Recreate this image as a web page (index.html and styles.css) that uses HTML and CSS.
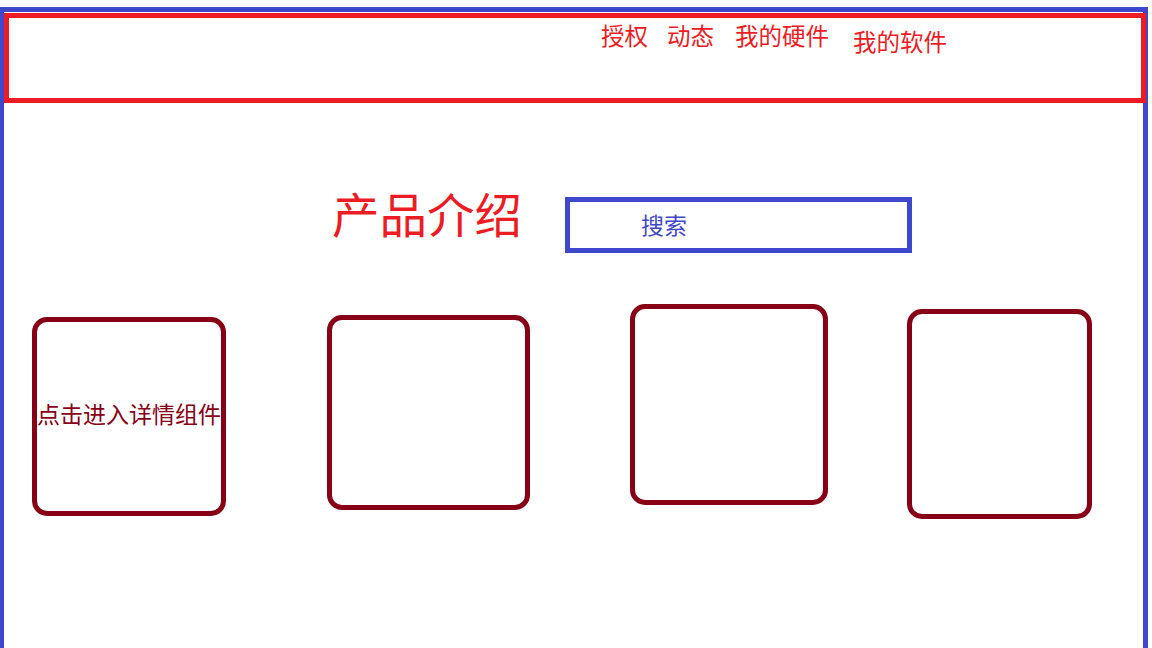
FILE: index.html
```html
<!DOCTYPE html>
<html lang="zh-CN">
<head>
<meta charset="utf-8">
<title>产品介绍</title>
<link rel="stylesheet" href="styles.css">
</head>
<body>
<div class="frame">
  <header class="header">
    <nav class="nav">
      <a class="nav-item nav-auth">授权</a>
      <a class="nav-item nav-news">动态</a>
      <a class="nav-item nav-hw">我的硬件</a>
      <a class="nav-item nav-sw">我的软件</a>
    </nav>
  </header>
  <section class="intro">
    <h1 class="title">产品介绍</h1>
    <div class="search">搜索</div>
  </section>
  <section class="cards">
    <div class="card card-1"><span class="card-text">点击进入详情组件</span></div>
    <div class="card card-2"></div>
    <div class="card card-3"></div>
    <div class="card card-4"></div>
  </section>
</div>
</body>
</html>
```
FILE: styles.css
```css
* { box-sizing: border-box; }
html, body { margin: 0; padding: 0; background: #ffffff; }
body {
  font-family: "Noto Sans CJK SC", "Noto Sans", sans-serif;
  overflow: hidden;
}
.frame {
  width: 1148px;
  height: 641px;
  margin-top: 7px;
  border-top: 5px solid #3f48cc;
  border-left: 4px solid #3f48cc;
  border-right: 5px solid #3f48cc;
  border-bottom: none;
}
.header {
  height: 90px;
  margin-top: 1px;
  margin-right: -3px;
  border: 5px solid #ed1c24;
  position: relative;
}
.nav {
  display: flex;
  align-items: flex-start;
  padding-top: 6px;
  padding-left: 592px;
}
.nav-item {
  font-size: 23.5px;
  line-height: 1;
  color: #ed1c24;
  text-decoration: none;
  white-space: nowrap;
}
.nav-news { margin-left: 19px; }
.nav-hw { margin-left: 21px; }
.nav-sw { margin-left: 24px; margin-top: 6px; }

.intro {
  display: flex;
  align-items: flex-start;
  margin-top: 86px;
  padding-left: 328px;
}
.title {
  margin: 0;
  font-size: 47.5px;
  line-height: 1;
  font-weight: 400;
  color: #ed1c24;
  white-space: nowrap;
}
.search {
  width: 347px;
  height: 56px;
  margin-left: 43px;
  margin-top: 8px;
  border: 5px solid #3f48cc;
  padding-left: 71px;
  padding-top: 11px;
  font-size: 23px;
  line-height: 1;
  color: #3f48cc;
}

.cards {
  display: flex;
  align-items: flex-start;
  margin-top: 51px;
}
.card {
  border: 5px solid #880015;
  border-radius: 15px;
  display: flex;
  align-items: center;
  justify-content: center;
}
.card-1 { width: 194px; height: 199px; margin-left: 28px; margin-top: 13px; padding-bottom: 6px; }
.card-2 { width: 203px; height: 195px; margin-left: 101px; margin-top: 11px; }
.card-3 { width: 198px; height: 201px; margin-left: 100px; margin-top: 0; }
.card-4 { width: 185px; height: 210px; margin-left: 79px; margin-top: 5px; }
.card-text {
  font-size: 23px;
  line-height: 1;
  color: #880015;
  white-space: nowrap;
}
```
